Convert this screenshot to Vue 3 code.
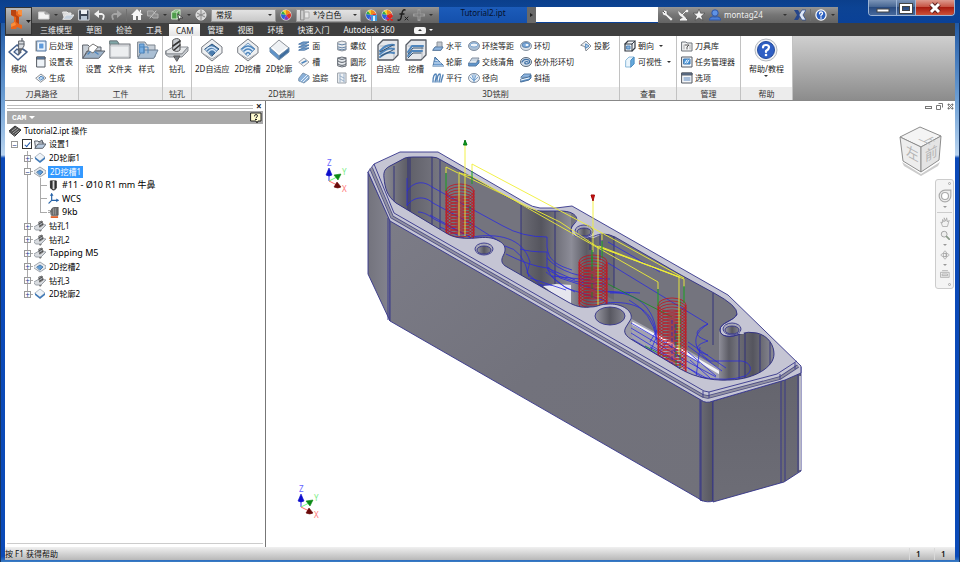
<script setup>
import { h, ref } from 'vue'

const K = '#5d626b'
const B = '#4f86bd'
const poly = (d, fill, stroke = K, w = 1) => `<path d="${d}" fill="${fill}" stroke="${stroke}" stroke-width="${w}" stroke-linejoin="round" stroke-linecap="round"/>`
const line = (d, stroke = K, w = 1) => poly(d, 'none', stroke, w)

const wheel = '<circle cx="6" cy="6" r="5.500" fill="#eee"/><path d="M6 6V1A5 5 0 0 1 10.500 4Z" fill="#f08a1c"/><path d="M6 6L10.500 4A5 5 0 0 1 9 10Z" fill="#e0352b"/><path d="M6 6L9 10A5 5 0 0 1 4 10.500Z" fill="#8a35b8"/><path d="M6 6L4 10.500A5 5 0 0 1 1.200 5Z" fill="#2c62d8"/><path d="M6 6L1.200 5A5 5 0 0 1 3 2Z" fill="#35a845"/><path d="M6 6L3 2A5 5 0 0 1 6 1Z" fill="#f4d52c"/>'
const hexBase = poly('M2 9L12 1L22 9V15L12 23L2 15Z', '#eef0f2', '#777b82') + line('M2 15L12 21L22 15', '#a4a8ae')
const block = poly('M2 7L7 2H22V17L17 22H2Z', '#e4e7eb', '#555b64', 1.3) + line('M4 8H18V20', '#b3b8bf')

const icons = {
  // large ribbon icons
  simulate: poly('M2 14L10 7L20 14L11 22Z', '#fff', '#46618c', 1.6) + poly('M7 14L10 11L14 14L11 17Z', '#dfe9f5', '#46618c', 1.3) + poly('M12 3H17V8L15 11H12Z', '#d9dce0', K) + line('M15 3V0M12 6H17', K, 1.2) + poly('M12 11L15 11L12 16Z', '#6d7178', K),
  setup: poly('M1 7H6L8 9H19V13H5L1 20Z', '#c9d0d8', K) + poly('M1 20L6 13H23L17 20Z', '#9db2c8', K) + poly('M7 9L11 6L16 9L11 15L7 13Z', '#fff', '#777') + line('M8 14L6 16M13 14L16 16', B, 1.4),
  folder: poly('M2 3H9L11 6H22V20H2Z', '#d8dade', '#777b80', 1.2) + poly('M2 3H9L11 6H2Z', '#7fa7a8', '#6f7f82') + poly('M3 8H21V19H3Z', '#eceef0', '#c4c7cb'),
  pattern: poly('M3 4H10L12 7H20V19H3Z', '#c7cfd8', '#7d858e') + poly('M3 20L7 12H23L19 20Z', '#aabfd4', '#6d7f92') + poly('M5 6H9V15H5Z', '#78aee2', B) + line('M5 9H13V15M9 9V15', B),
  drill: poly('M1 13L8 9H23L17 16H1Z', '#e6e8ea', '#8b8f95') + poly('M1 13V17L4 19H17L23 13V9L17 16H1Z', '#c4c8cc', '#8b8f95') + poly('M8 2Q12 -1 15 2V12Q12 15 8 12Z', '#c8ccd1', '#555') + line('M8 8L15 3M9 12L15 7', '#333', 1.6) + poly('M9 18H15L12 23Z', '#777c83', '#555'),
  adaptive2d: hexBase + poly('M5 11L12 6L19 11L12 18Z', '#4a7cae', '#2f5780') + line('M6 12Q11 6 17 12M8 14Q12 9 16 14', '#cfe2f5', 1.3),
  pocket2d: hexBase + poly('M5 11L12 5L19 11L12 18Z', '#dcebf8', '#7b9cbc') + line('M6 11Q12 5 18 11M8 13Q12 9 16 13M10 16Q12 13 14 16', B, 1.6),
  contour2d: poly('M3 10L12 2L22 10L12 18Z', '#eef1f4', '#8b9097') + poly('M3 10V14L12 22V18Z', '#5e93ca', '#6f8fae') + poly('M22 10V14L12 22V18Z', '#3e6d9f', '#6f8fae') + line('M5 10L12 16L20 10', '#fff', 1.5),
  adaptive3d: block + line('M4 13Q10 6 18 7M4 16Q12 9 18 11M4 19Q11 13 18 15', B, 2) + line('M4 14L17 7M5 18L17 12', '#36526f'),
  pocket3d: block + line('M4 14L8 8H19M4 18L8 13H18', B, 2) + line('M4 16L9 10H19M4 20L9 15H17', '#36526f'),
  helpBig: '<circle cx="12" cy="12" r="11" fill="#f0f1f4" stroke="#b4b9c0"/><circle cx="12" cy="12" r="8.500" fill="#2f5fc4" stroke="#234a9c"/>' + line('M9 9.500Q9 7 12 7Q15 7 15 9.500Q15 11 12 13V14', '#fff', 2.2) + '<circle cx="12" cy="17" r="1.300" fill="#fff"/>',
  // small ribbon icons
  post: poly('M2 1H11V11H2Z', '#cfe2f6', '#50739c') + poly('M4 3H9V9H4Z', '#5f9bdc', '#fff') + line('M1 1V11', '#888'),
  sheet: poly('M2 1H10V11H2Z', '#eef3f8', '#555b64') + poly('M2 1H10V3H2Z', '#5c8dc4', '#555b64'),
  generate: poly('M1 6L6 2L11 6L6 10Z', '#f4f5f6', '#8a8f96') + poly('M4 6L6 4L9 6L6 8Z', '#b9d6f2', B),
  face: poly('M1 4L5 2L11 2L7 4ZM1 7L5 5L11 5L7 7ZM1 10L5 8L11 8L7 10Z', '#7da9d8', '#4a76a6'),
  slot: poly('M1 6L6 2L11 6L6 10Z', '#f4f5f6', '#9a9fa6') + line('M4 7L8 5', B, 1.6),
  trace: poly('M1 6L5 1L11 4V7L6 11L1 9Z', '#8ab1da', '#7a94ae') + line('M3 9L9 3M5 10L10 5', '#e8f1fa'),
  thread: poly('M2 2Q6 0 10 2V10Q6 12 2 10Z', '#e9ecef', '#8f949b') + line('M2 4Q6 6 10 4M2 7Q6 9 10 7M2 9Q6 11 10 9', '#6483a5'),
  circular: poly('M2 2Q6 0 10 2V10Q6 12 2 10Z', '#e6eaee', '#646a73') + line('M2 2Q6 5 10 2M2 5Q6 8 10 5M2 8Q6 11 10 8', '#575d66'),
  bore: poly('M2 1H10V11H2Z', '#f0f3f6', '#9aa0a8') + line('M4 2V10M8 2V10M4 4L8 6M4 7L8 9', '#9ab0c8'),
  horizontal: poly('M1 10L3 7L5 7V2H10V7L11 7L9 10Z', '#c2c8cf', '#8b9199') + poly('M1 10L3 7H11L9 10Z', '#8fb5de', '#5b7fa6'),
  contour3d: poly('M1 10L3 1L6 4L8 6L12 10Z', '#6d9dd0', '#4a739e') + line('M3 4L6 5M2 7L9 7M1 10H12', '#dce9f6'),
  parallel: line('M1 10Q1 2 4 2Q5 3 3 10M5 10Q5 2 8 2Q9 3 7 10M9 10L11 3', '#5585b8', 1.4),
  scallop: '<ellipse cx="6" cy="6" rx="5.500" ry="4.500" fill="#a9bed4" stroke="#8490a0"/><ellipse cx="6" cy="5" rx="4" ry="2" fill="#eef4fa" stroke="#7aa4d0"/>',
  pencil: poly('M1 7L4 2H11L8 7Z', '#c8d5e2', '#8490a0') + poly('M1 7H8L11 4V7L8 10H1Z', '#5f94ca', '#5b7fa6') + line('M2 6H8', '#fff'),
  radial: '<ellipse cx="6" cy="6" rx="5.500" ry="4.500" fill="#edf2f7" stroke="#8490a0"/>' + line('M6 9L2 5M6 9L4 3M6 9V2M6 9L8 3M6 9L10 5', '#7ba6d3'),
  morph: '<ellipse cx="6" cy="6" rx="5.500" ry="4.500" fill="#dbe1e8" stroke="#8b96a3"/><ellipse cx="6" cy="5" rx="4" ry="2.500" fill="#7aa8da" stroke="#5b83ad"/><ellipse cx="7" cy="5" rx="1.500" ry="1" fill="#fff"/>',
  spiral: '<ellipse cx="6" cy="6" rx="5.500" ry="4.500" fill="#d3dfec" stroke="#606c7a"/>' + line('M2 6Q4 2 9 4Q11 7 7 8Q4 8 5 6Q7 5 8 6', '#3f6fa3', 1.2),
  ramp: poly('M1 5L4 2H11L9 5Z', '#8db5e0', '#5b7fa6') + poly('M1 7L9 5L11 3V6L9 8L1 10Z', '#5f94ca', '#476f9a') + line('M1 8L9 6', '#fff'),
  project: poly('M1 5L6 1L11 6L6 11L5 7Z', '#eef0f2', '#8a8f96') + poly('M6 4L9 6L6 8Z', '#c5dbf1', B),
  orient: poly('M1 4L4 1H11V8L8 11H1Z', '#f2f4f6', '#333a44', 1.2) + line('M1 4H8V11M8 4L11 1', '#333a44') + poly('M3 6H6V9H3Z', '#8ab4de', B),
  visible: poly('M2 4L5 1H10V8L7 11H2Z', '#eaf5fc', '#8ab9da') + poly('M7 4L10 1V8L7 11Z', '#66a9dc', '#4d8ec2'),
  library: poly('M1 2H5L6 3H11V11H1Z', '#f3f4f5', '#6d7279') + line('M4 5H8L6 7V9', '#555') + line('M3 5V9M9 5V9', '#aaa'),
  tasks: poly('M1 1H11V11H1Z', '#f4f8fc', '#555b64') + poly('M3 3H9V8H3Z', '#4f9be0', '#3b75ad') + line('M4 7L6 4M6 7L8 4', '#fff'),
  options: poly('M1 1H11V11H1Z', '#f4f6f8', '#555b64') + poly('M1 1H11V3H1Z', '#5b7498', '#555b64') + line('M3 6H9M3 8H9', '#5b86bd'),
  // quick access icons
  newDoc: poly('M1 3H7L11 5V10H1Z', '#f3f3f3', '#d6d6d6') + poly('M7 3V5H11Z', '#bbb', '#999'),
  open: poly('M1 3H5L6 4H9V5L3 10Z', '#dcdcdc', '#eee') + poly('M1 10L4 6H12L9 10Z', '#c3cfdc', '#e9e9e9'),
  save: poly('M1 1H11V11H1Z', '#3c4654', '#d2d7dd') + '<path d="M3 1H9V5H3Z" fill="#eef2f5"/><path d="M3 7H9V11H3Z" fill="#b9c6d4"/>',
  undo: line('M3 5H8Q11 6 9 10', '#f1f1f1', 1.8) + '<path d="M0 5L5 1V9Z" fill="#f1f1f1"/>',
  redo: line('M9 5H4Q1 6 3 10', '#a5a5a5', 1.8) + '<path d="M12 5L7 1V9Z" fill="#a5a5a5"/>',
  home: '<path d="M6 0L12 6H10V11H7V7H5V11H2V6H0Z" fill="#f5f5f5"/><path d="M9 1H10V4L9 3Z" fill="#fff"/>',
  transfer: poly('M1 2H6L8 5H11V9H6L4 7H1Z', '#8d8d8d', '#b0b0b0') + line('M3 9L9 2', '#c6c6c6'),
  select: poly('M1 3L4 1H9V8L6 10H1Z', '#4e9d4a', '#cfe8cc') + line('M1 3H6V10M6 3L9 1', '#cfe8cc') + poly('M7 5L12 9L9 9L8 12Z', '#fff', '#444'),
  sphere: '<circle cx="6" cy="6" r="5" fill="#d5d5d5" stroke="#f0f0f0"/>' + line('M2 4L10 8M6 1V11M2 8L10 4', '#888'),
  wheel,
  wheelPin: wheel + '<path d="M6 6H12V12H6Z" fill="#3f9be0"/><path d="M8 7H10V12H8Z" fill="#d5ecff"/>',
  wheelX: wheel + line('M7 7L11 11M11 7L7 11', '#e0201a', 1.8),
  fx: line('M8 1Q6 0 5 4L4 9Q3 12 1 11M3 5H7', '#1e1e1e', 1.4) + line('M8 8L11 11M11 8L8 11', '#1e1e1e'),
  plus: line('M6 1V11M1 6H11', '#9c9c9c', 3) + line('M6 2V10M2 6H10', '#757575'),
  swatch: poly('M1 1H4V11H1Z', '#cfcfcf', '#8d8d8d') + poly('M5 3H9V9H5Z', '#e8e8e8', '#aaa'),
  // info bar
  wrench: '<path d="M1 3L3 1L6 2L6 5L12 10L10 12L5 7L2 6Z" fill="#f2f2f2" stroke="#555" stroke-width=".5"/><path d="M2 2L4 4" stroke="#555"/>',
  dish: '<path d="M1 2Q2 9 9 9L6 6Z" fill="#f2f2f2"/><path d="M5 6L9 2M3 11H10L7 8Z" stroke="#f2f2f2" fill="#f2f2f2"/><circle cx="10" cy="2" r="1.300" fill="#f2f2f2"/>',
  star: '<path d="M6 0L7.600 4.200H12L8.500 7L9.800 11.500L6 8.800L2.200 11.500L3.500 7L0 4.200H4.400Z" fill="#f5f5f5" stroke="#444" stroke-width=".6"/>',
  user: '<circle cx="6" cy="4" r="3.200" fill="#5f93e6" stroke="#2f57a8"/><path d="M0 11Q1 7 6 8Q11 7 12 11Z" fill="#4c80d8" stroke="#2f57a8"/>',
  exchange: '<path d="M0 1H4L7 6L4 11H0L3 6Z" fill="#26458a"/><path d="M12 1H8L5 6L8 11H12L9 6Z" fill="#dfe8f6" stroke="#26458a" stroke-width=".7"/>',
  help: '<circle cx="6" cy="6" r="5.700" fill="#fff"/><circle cx="6" cy="6" r="4.500" fill="#2c5fbe"/>' + line('M4.500 4.800Q4.500 3 6 3Q7.700 3 7.500 4.600Q7.500 5.500 6 6.300V7', '#fff', 1.3) + '<circle cx="6" cy="9" r=".8" fill="#fff"/>',
  media: '<rect x="0" y="3" width="12" height="7" rx="2" fill="#f4f4f4"/><path d="M4 7L6 5L8 7Z" fill="#333"/>',
  // browser tree
  part: poly('M0 6L6 1L12 5L6 11Z', '#4c4c4c', '#333') + line('M3 6L7 3M4 8L9 4M6 9L10 6', '#a9a9a9'),
  treeSetup: poly('M1 3H4L5 4H9V7L2 10Z', '#e6e9ee', '#59606a') + poly('M1 10L4 6H12L9 10Z', '#b9cbe0', '#59606a') + line('M5 4L8 2L9 5', '#59606a'),
  treeContour: poly('M1 5L6 1L11 5L6 9Z', '#eef3f8', '#b4bcc5') + '<path d="M1 5V7L6 11L11 7V5L6 9Z" fill="#3f79b8"/>',
  treePocket: poly('M0 5L6 1L12 5V7L6 11L0 7Z', '#e6e9ec', '#a0a5ac') + poly('M3 6L6 4L9 6L6 9Z', '#5d9bd8', '#4d7aa6'),
  treeDrill: poly('M0 7L5 4L12 5L7 10H2Z', '#d8dbdf', '#9aa0a8') + poly('M5 2L8 1L9 5L6 7Z', '#a4a9b0', '#777') + line('M5 4L8 2M6 6L9 4', '#444') + '<path d="M5 10H8L6 12Z" fill="#777"/>',
  endmill: poly('M3 1H9V9Q6 13 3 9Z', '#333', '#222') + '<path d="M5 1H7V10H5Z" fill="#d9d9d9"/>',
  wcs: line('M4 1V8H11M4 8L1 11', '#2864a8', 1.3) + '<path d="M2 3L4 0L6 3ZM9 6L12 8L9 10Z" fill="#2864a8"/>',
  nc: poly('M3 4L5 1L11 0V9H4Z', '#6d6d6d', '#555') + line('M6 2V8M8 2V8M0 4H3M0 6H3', '#9a9a9a') + '<path d="M3 10H11V12H3Z" fill="#e0622c"/>',
  helpNote: poly('M1 1H11V9H8L7 11L6 9H1Z', '#fffbd0', '#222') + line('M4.500 4Q4.500 2.500 6 2.500Q7.500 2.500 7.500 4L6 6', '#222') + '<rect x="5" y="7" width="2" height="1" fill="#222"/>',
  // navigation bar
  navWheel: '<path d="M1 6A5 5 0 0 1 6 1H11V6A5 5 0 0 1 1 6Z" fill="#eee" stroke="#aaa"/><circle cx="6" cy="6" r="3" fill="#fff" stroke="#aaa"/>',
  hand: poly('M3 11L1 6L3 7V3L5 6V1L7 5L8 1L9 6L11 4L9 11Z', '#f2f2f2', '#aaa'),
  zoom: '<circle cx="5" cy="5" r="3.500" fill="#eee" stroke="#999"/>' + line('M8 8L11 11', '#8a9a88', 2),
  orbit: '<ellipse cx="6" cy="6" rx="5" ry="2" fill="none" stroke="#aaa"/><ellipse cx="6" cy="6" rx="2" ry="5" fill="none" stroke="#aaa"/>' + line('M6 4L8 6L6 8', '#999'),
  look: poly('M1 4H11V10H1Z', '#eee', '#aaa') + line('M3 2H9M3 6H9V8H3Z', '#aaa')
}

const Icon = ({ name, size }) => h('svg', { viewBox: `0 0 ${size || 12} ${size || 12}`, 'aria-hidden': 'true', innerHTML: icons[name] })
Icon.props = ['name', 'size']

const quickA = [['newDoc', '新建', true], ['open', '打开'], ['save', '保存'], ['undo', '放弃'], ['redo', '重做']]
const quickB = [['home', '主视图'], ['transfer', '传递', true], ['select', '选择', true], ['sphere', '材料']]
const quickC = [['wheelPin', '调整'], ['wheelX', '清除'], ['fx', '参数'], ['plus', '添加', true]]
const tabs = ['三维模型', '草图', '检验', '工具', 'CAM', '管理', '视图', '环境', '快速入门', 'Autodesk 360']
const activeTab = ref('CAM')

const panels = [
  { id: 'path', title: '刀具路径', big: [['simulate', '模拟']], cols: [[['post', '后处理'], ['sheet', '设置表'], ['generate', '生成']]] },
  { id: 'job', title: '工件', big: [['setup', '设置'], ['folder', '文件夹'], ['pattern', '样式']], cols: [] },
  { id: 'drilling', title: '钻孔', big: [['drill', '钻孔']], cols: [] },
  { id: 'mill2d', title: '2D铣削', big: [['adaptive2d', '2D自适应'], ['pocket2d', '2D挖槽'], ['contour2d', '2D轮廓']], cols: [[['face', '面'], ['slot', '槽'], ['trace', '追踪']], [['thread', '螺纹'], ['circular', '圆形'], ['bore', '镗孔']]] },
  { id: 'mill3d', title: '3D铣削', big: [['adaptive3d', '自适应'], ['pocket3d', '挖槽']], cols: [[['horizontal', '水平'], ['contour3d', '轮廓'], ['parallel', '平行']], [['scallop', '环绕等距'], ['pencil', '交线清角'], ['radial', '径向']], [['morph', '环切'], ['spiral', '依外形环切'], ['ramp', '斜插']], [['project', '投影']]] },
  { id: 'look', title: '查看', big: [], cols: [[['orient', '朝向', true], ['visible', '可视性', true]]] },
  { id: 'manage', title: '管理', big: [], cols: [[['library', '刀具库'], ['tasks', '任务管理器'], ['options', '选项']]] },
  { id: 'assist', title: '帮助', big: [['helpBig', '帮助/教程', true]], cols: [] }
]

const tree = [
  { level: 0, icon: 'part', label: 'Tutorial2.ipt 操作' },
  { level: 1, icon: 'treeSetup', label: '设置1', exp: '−' },
  { level: 2, icon: 'treeContour', label: '2D轮廓1', exp: '+' },
  { level: 2, icon: 'treePocket', label: '2D挖槽1', exp: '−', selected: true },
  { level: 3, icon: 'endmill', label: '#11 - Ø10 R1 mm 牛鼻', latin: true },
  { level: 3, icon: 'wcs', label: 'WCS', latin: true },
  { level: 3, icon: 'nc', label: '9kb', latin: true, last: true },
  { level: 2, icon: 'treeDrill', label: '钻孔1', exp: '+' },
  { level: 2, icon: 'treeDrill', label: '钻孔2', exp: '+' },
  { level: 2, icon: 'treeDrill', label: 'Tapping M5', exp: '+', latin: true },
  { level: 2, icon: 'treePocket', label: '2D挖槽2', exp: '+' },
  { level: 2, icon: 'treeDrill', label: '钻孔3', exp: '+' },
  { level: 2, icon: 'treeContour', label: '2D轮廓2', exp: '+', last: true }
]

const pocket = 'M384 178C383 171 386 168 390 166L405 158Q408 157 413 157H432Q437 157 441 160L520 204C529 209 534 211 543 211H560C570 211 576 214 577 219C577 223 571 225 571 230C571 235 577 238 584 238C594 238 596 234 603 234Q609 234 615 237L681 275L714 293Q738 306 737 314C735 321 720 322 720 330C720 337 731 338 740 334Q748 331 757 333C769 336 774 346 774 354C774 367 755 379 730 380C708 381 690 376 674 365L634 341C625 336 623 332 626 327L631 319C633 311 623 304 610 304C598 304 599 307 590 307C581 308 575 306 568 302L507 267C501 264 501 260 503 256C507 249 505 244 499 241C492 237 485 237 476 238C463 239 454 238 446 233L396 203C387 196 385 188 384 178Z'

const helix = (cx, top, bottom, step) => {
  const rings = []
  for (let y = top; y <= bottom; y += step) rings.push({ cx, cy: y })
  return rings
}
const helices = [
  { x: 446, top: 190, bottom: 236, rings: helix(460, 191, 240, 3) },
  { x: 579, top: 262, bottom: 304, rings: helix(593, 262, 306, 3) },
  { x: 658, top: 305, bottom: 372, rings: helix(672, 305, 372, 3) }
]

const blueCuts = [
  'M407 191C413 182 423 180 432 187L470 208L503 226Q522 237 547 237V247C548 262 560 266 572 270',
  'M407 205C415 196 425 196 433 203L470 223L500 242M520 249Q530 252 547 252V267C550 278 560 285 575 292',
  'M407 178V206M418 212C424 212 430 216 434 219L470 237',
  'M430 215L475 240M440 227L464 238',
  'M472 237C497 233 523 237 530 262L527 273L543 287',
  'M505 246Q524 250 529 277M506 254Q530 266 547 268L575 280',
  'M548 267L560 278L600 291L640 293M546 272L566 288L606 301',
  'M547 258Q565 278 610 279M530 278L566 290M530 285H552M552 276L590 280M548 270Q570 285 606 284',
  'M608 242L660 272M608 263L708 324C693 331 694 336 708 341C694 345 694 351 708 355',
  'M708 324C690 335 693 350 710 361H741C751 362 754 371 745 376Q728 382 700 377',
  'M610 293L630 293M605 303C635 300 655 310 656 338L650 352M608 292C640 292 658 310 657 345',
  'M629 300Q652 312 657 340M631 328L690 363L716 377',
  'M631 333L683 365M632 339L680 368M700 347L696 377M631 323L700 363M632 343L672 367',
  'M650 342L657 330M660 352L668 340',
  'M688 346L722 371M688 352L716 376M690 360L710 378M650 347L708 379M688 342L726 368M688 368L706 380'
]
</script>

<template>
  <div class="window">
    <header class="head">
      <button class="app-button" aria-label="应用程序菜单">
        <svg viewBox="0 0 27 27" aria-hidden="true">
          <path d="M5 2H10L11 4L12 2H16V8L13 9V16L16 17V21L11 19L10 21H5V16L8 14V9L5 7Z" fill="#e8651b" />
          <path d="M5 2H10V7L13 9V16L10 14V9L5 7Z" fill="#b94410" />
          <path d="M12 2H16V8L12 6ZM5 16L9 14L10 17L5 19Z" fill="#f98f3c" />
          <path d="M20 12H25L22.500 15Z" fill="#222" />
        </svg>
      </button>
      <div class="title-row">
        <div class="quick">
          <template v-for="q in quickA" :key="q[0]">
            <button class="tool" :aria-label="q[1]"><Icon :name="q[0]" /></button><i v-if="q[2]" class="caret"></i>
          </template>
          <i class="rule"></i>
          <template v-for="q in quickB" :key="q[0]">
            <button class="tool" :aria-label="q[1]"><Icon :name="q[0]" /></button><i v-if="q[2]" class="caret"></i>
          </template>
          <div class="combo">
            <select aria-label="材料"><option>常规</option></select><i class="caret"></i>
          </div>
          <button class="tool" aria-label="外观"><Icon name="wheel" /></button>
          <div class="combo">
            <Icon name="swatch" class="ico" /><select aria-label="外观"><option>*冷白色</option></select><i class="caret"></i>
          </div>
          <template v-for="q in quickC" :key="q[0]">
            <button class="tool" :aria-label="q[1]"><Icon :name="q[0]" /></button><i v-if="q[2]" class="caret"></i>
          </template>
        </div>
        <h1 class="doc-title">Tutorial2.ipt</h1>
        <button class="expand" aria-label="展开"><i></i></button>
        <input class="search" type="text" aria-label="搜索" />
        <div class="info">
          <button class="tool" aria-label="搜索工具"><Icon name="wrench" /></button>
          <button class="tool" aria-label="通讯中心"><Icon name="dish" /></button>
          <button class="tool" aria-label="收藏夹"><Icon name="star" /></button>
          <button class="account"><Icon name="user" class="ico" /><span>montag24</span><i class="caret"></i></button>
          <button class="tool" aria-label="Exchange"><Icon name="exchange" /></button>
          <i class="rule"></i>
          <button class="tool" aria-label="帮助"><Icon name="help" /></button><i class="caret"></i>
        </div>
        <div class="controls">
          <button aria-label="最小化"><svg viewBox="0 0 18 16"><rect x="3" y="9" width="12" height="3" fill="#fff" stroke="#444" /></svg></button>
          <button class="max" aria-label="最大化"><svg viewBox="0 0 18 16"><rect x="4" y="5" width="10" height="7" fill="none" stroke="#444" stroke-width="4" /><rect x="4" y="5" width="10" height="7" fill="none" stroke="#fff" stroke-width="2" /></svg></button>
          <button class="close" aria-label="关闭"><svg viewBox="0 0 18 16"><path d="M5 4L13 12M13 4L5 12" stroke="#5a2020" stroke-width="5" /><path d="M5 4L13 12M13 4L5 12" stroke="#fff" stroke-width="3" /></svg></button>
        </div>
      </div>
      <nav class="tabs">
        <button v-for="t in tabs" :key="t" :class="{ active: t === activeTab }" @click="activeTab = t">{{ t }}</button>
        <button class="media" aria-label="功能区显示"><Icon name="media" class="ico" /><i class="caret light"></i></button>
      </nav>
    </header>

    <div class="ribbon">
      <section v-for="p in panels" :key="p.id" class="panel" :class="p.id">
        <div class="panel-body">
          <button v-for="b in p.big" :key="b[1]" class="big">
            <Icon :name="b[0]" :size="24" /><span>{{ b[1] }}</span><i v-if="b[2]" class="caret"></i>
          </button>
          <div v-for="(c, i) in p.cols" :key="i" class="col">
            <button v-for="s in c" :key="s[1]"><Icon :name="s[0]" class="ico" /><span>{{ s[1] }}</span><i v-if="s[2]" class="caret"></i></button>
          </div>
        </div>
        <h2>{{ p.title }}</h2>
      </section>
    </div>

    <main class="work">
      <aside class="browser">
        <div class="grip"><i></i><button aria-label="关闭面板">×</button></div>
        <div class="browser-head"><button>CAM<i></i></button><button class="tool" aria-label="面板帮助"><Icon name="helpNote" /></button></div>
        <ul class="tree">
          <li v-for="n in tree" :key="n.label" :class="['l' + n.level, { last: n.last, latin: n.latin }]">
            <i v-if="n.level > 1" class="guide"></i>
            <i v-if="n.level === 3" class="branch"></i>
            <button v-if="n.exp" class="exp" :aria-label="'展开 ' + n.label">{{ n.exp }}</button>
            <input v-if="n.level === 1" type="checkbox" checked :aria-label="n.label" />
            <Icon :name="n.icon" class="ico" />
            <span :class="{ selected: n.selected }">{{ n.label }}</span>
          </li>
        </ul>
        <i class="foot"></i>
      </aside>

      <div class="view">
        <svg class="scene" viewBox="266 101 689 446" preserveAspectRatio="xMinYMin meet" role="img" aria-label="零件模型">
          <defs>
            <linearGradient id="front" x1="0" y1="0" x2="1" y2="1"><stop offset="0" stop-color="#7c7c87" /><stop offset=".5" stop-color="#72727c" /><stop offset="1" stop-color="#71717a" /></linearGradient>
            <linearGradient id="side" x1="0" y1="0" x2="0" y2="1"><stop offset="0" stop-color="#64646d" /><stop offset="1" stop-color="#6d6d76" /></linearGradient>
            <linearGradient id="left" x1="0" y1="0" x2="1" y2="0"><stop offset="0" stop-color="#73737d" /><stop offset="1" stop-color="#84848f" /></linearGradient>
            <linearGradient id="edge" x1="0" y1="0" x2="1" y2="0"><stop offset="0" stop-color="#6b6b75" /><stop offset="1" stop-color="#56565f" /></linearGradient>
            <linearGradient id="column" x1="0" y1="0" x2="1" y2="0"><stop offset="0" stop-color="#8e8e99" /><stop offset=".5" stop-color="#5c5c65" /><stop offset="1" stop-color="#777781" /></linearGradient>
            <linearGradient id="bend" x1="0" y1="0" x2="1" y2="0"><stop offset="0" stop-color="#6b6b74" /><stop offset=".4" stop-color="#55555e" /><stop offset="1" stop-color="#8c8c97" /></linearGradient>
            <linearGradient id="wallLeft" x1="0" y1="0" x2="1" y2="0"><stop offset="0" stop-color="#8d8d98" /><stop offset=".4" stop-color="#5e5e67" /><stop offset="1" stop-color="#777781" /></linearGradient>
            <linearGradient id="hole" x1="0" y1="0" x2="1" y2="0"><stop offset="0" stop-color="#9a9aa4" /><stop offset=".5" stop-color="#585861" /><stop offset="1" stop-color="#85858f" /></linearGradient>
            <clipPath id="pocket"><path :d="pocket" /></clipPath>
          </defs>

          <g stroke="#34348a" stroke-width=".9" stroke-linejoin="round">
            <path d="M368 172L390 220V321L368 274Z" fill="url(#left)" />
            <path d="M390 220L703 401V501L390 321Z" fill="url(#front)" />
            <path d="M700 399Q706 403 713 401V501Q708 503 700 500Z" fill="url(#edge)" />
            <path d="M713 401L784 380L801 367V471L784 482L713 502Z" fill="url(#side)" />
            <path d="M388 218V320M701 401V501M781 381V483M785 380V481M798 371V472" fill="none" />
            <path d="M368 172L374 164L400 152H438L526 203Q532 207 540 208H556L572 206L728 295L801 366V373L785 380L713 401Q706 404 701 400L390 221Z" fill="#c5c5d4" />
            <path d="M371 168L392 217L703 396L708 397L780 378L798 366" fill="none" stroke="#4c4c84" stroke-width="3.600" />
            <path d="M371 168L392 217L703 396L708 397L780 378L798 366" fill="none" stroke="#9191a2" stroke-width="2" />
            <path d="M374 164L394 213L704 391L709 392L777 374L797 361M780 374V379M703 391V397M709 392V398M795 363V369" fill="none" />
          </g>
          <path d="M800 376V470" stroke="#b9b9c6" stroke-width="2" />

          <path :d="pocket" fill="#74747e" />
          <g clip-path="url(#pocket)" stroke-width=".8">
            <path d="M384 150H440V235H384Z" fill="url(#wallLeft)" />
            <path d="M521 200H571V290H521Z" fill="url(#bend)" />
            <path d="M543 286L556 284L572 285V303H566Z" fill="#e6e6ee" />
            <path d="M630 318L655 332L728 373L722 382L690 378L625 341Z" fill="#a3a3b0" />
            <path d="M632 323L660 338L720 373" stroke="#f3f3f8" stroke-width="3" fill="none" />
            <path d="M571 230H602V310H571Z" fill="url(#column)" />
            <path d="M602 230H614V300L602 294Z" fill="#696973" />
            <path d="M719 330H739V384H719Z" fill="url(#column)" />
            <path d="M739 330H774V384H739Z" fill="url(#bend)" />
            <path d="M624 327L632 316V342H624Z" fill="#9a9aa6" />
            <path d="M394 166V203M408 157V211M410 157V212M432 157V226M440 160V230M521 204V275M555 211V284M614 237V288M713 293V345M739 333V379M745 333V379M760 335V376M770 342V368M590 238V250M600 235V260" fill="none" stroke="#24247c" />
            <path v-for="(d, i) in blueCuts" :key="i" :d="d" fill="none" stroke="#2a2ae0" />
            <path d="M506 267L566 302M608 284L672 317M645 346L675 362" stroke="#13901c" fill="none" />
            <g v-for="(x, i) in helices" :key="i" fill="none" stroke="#c4141e">
              <ellipse v-for="(r, j) in x.rings" :key="j" :cx="r.cx" :cy="r.cy" rx="14" ry="7" />
              <path :d="`M${x.x} ${x.top}V${x.bottom}M${x.x + 28} ${x.top}V${x.bottom}`" />
            </g>
            <path d="M672 320V366M675 324V360M669 345L684 362" stroke="#2828c0" stroke-dasharray="4 2" fill="none" />
            <path d="M470 206V226M592 256V300M598 262V296M680 300V368M676 324V370" stroke="#13901c" stroke-dasharray="6 3" fill="none" />
          </g>
          <path :d="pocket" fill="none" stroke="#2e2e84" stroke-width=".9" />

          <path d="M572 235C570 226 577 222 577 218L590 226L602 234L594 238H578Z" fill="#c5c5d4" />
          <path d="M723 335C718 327 732 322 736 316L744 334H735Z" fill="#c5c5d4" />
          <g stroke="#34348a" stroke-width=".9">
            <path d="M577 219C577 223 571 225 571 230C571 235 577 238 584 238C594 238 596 234 603 234M737 314C735 321 720 322 720 330C720 337 731 338 740 334" fill="none" />
            <ellipse cx="584" cy="231" rx="9" ry="6" fill="#a9a9b6" /><ellipse cx="584" cy="232" rx="7" ry="4" fill="url(#hole)" />
            <ellipse cx="484" cy="249" rx="9" ry="6" fill="#a9a9b6" /><ellipse cx="484" cy="250" rx="7" ry="4" fill="url(#hole)" />
            <ellipse cx="610" cy="316" rx="15" ry="9" fill="url(#hole)" />
            <ellipse cx="732" cy="329" rx="9" ry="6" fill="#a9a9b6" /><ellipse cx="732" cy="330" rx="7" ry="4" fill="url(#hole)" />
          </g>

          <g fill="none" stroke="#f1ef35" stroke-width=".9">
            <path d="M465 144V236M459 172V236M459 173L471 176M446 173V167L458 173M472 171V164L602 233L684 278M459 173L560 222L596 246L680 277M471 176L600 249L658 282V289M602 233V240M593 200V252M598 246V305M599 246L679 277V355M602 248L684 279V287" />
          </g>
          <path d="M446 173V191M472 171V184M602 241V258M658 289V306M684 286V303M592 250V266" stroke="#16a21f" />
          <path d="M465 140L467 145H463.500Z" fill="#08a71c" stroke="#067512" />
          <path d="M591 195H594.500L593 201Z" fill="#d01212" stroke="#a00808" />

          <g v-for="(o, i) in [[329, 181], [301, 507]]" :key="i" :transform="`translate(${o[0]} ${o[1]})`">
            <path d="M0 0V-10" stroke="#3333ee" /><path d="M0 0L8 -4" stroke="#6aff7a" /><path d="M0 0L8 4" stroke="#ff6a6a" />
            <path d="M-3 -6L0 -13L3 -6Q0 -4 -3 -6Z" fill="#0d0dcc" stroke="#0d0dcc" stroke-width=".6" />
            <path d="M5 -6L12 -7L9 -1Z" fill="#0a8a14" stroke="#0a8a14" stroke-width=".6" />
            <path d="M5 6L8 1L12 6Q9 8 5 6Z" fill="#6a0a0a" stroke="#6a0a0a" stroke-width=".6" />
            <text x="-2" y="-15" fill="#6666ff">Z</text><text x="13" y="-6" fill="#7dee88">Y</text><text x="13" y="11" fill="#ff7777">X</text>
          </g>
        </svg>

        <div class="doc-controls">
          <button aria-label="最小化文档"><svg viewBox="0 0 7 7"><rect x=".5" y="3.500" width="6" height="2" fill="#fff" stroke="#777" /></svg></button>
          <button aria-label="还原文档"><svg viewBox="0 0 7 7"><path d="M2.500 .5H6.500V4.500M.5 2.500H4.500V6.500H.5Z" fill="none" stroke="#777" /></svg></button>
          <button aria-label="关闭文档"><svg viewBox="0 0 7 7"><path d="M1 1L6 6M6 1L1 6" stroke="#777" stroke-width="2" /><path d="M2 2L5 5M5 2L2 5" stroke="#fff" /></svg></button>
        </div>
        <svg class="cube" viewBox="0 0 46 50" aria-label="ViewCube" role="img">
          <path d="M4 36L23 48L42 36L40 40L23 50L6 40Z" fill="#ccc" />
          <g stroke="#8d8d8d" stroke-linejoin="round">
            <path d="M2 11L22 1L43 10L23 21Z" fill="#f4f4f4" />
            <path d="M2 11L23 21V46L5 35Z" fill="#ededed" />
            <path d="M43 10L23 21V46L41 34Z" fill="#e4e4e4" />
          </g>
          <text transform="matrix(.9 .4 -.8 .4 20 13)">上</text>
          <text transform="matrix(.9 .5 0 1 8 29)">左</text>
          <text transform="matrix(.9 -.5 0 1 27 36)">前</text>
        </svg>
        <div class="nav-bar">
          <i class="dot"></i>
          <button aria-label="控制盘"><Icon name="navWheel" class="wheel" /></button><i class="caret"></i>
          <hr />
          <button aria-label="平移"><Icon name="hand" /></button>
          <button aria-label="缩放"><Icon name="zoom" /></button><i class="caret"></i>
          <button aria-label="动态观察"><Icon name="orbit" /></button><i class="caret"></i>
          <button aria-label="观察方向"><Icon name="look" /></button>
          <i class="dot"></i>
        </div>
      </div>
    </main>

    <footer class="status"><span>按 F1 获得帮助</span><b>1</b><b>1</b></footer>
  </div>
</template>

<style>
body { margin: 0; background: #0a4aa8; }
</style>

<style scoped>
.window {
  box-sizing: border-box;
  min-height: 100vh;
  display: grid;
  grid-template-rows: auto auto 1fr auto;
  padding: 0 5px 2px;
  background:
    linear-gradient(#0b3f8c, #0c4394 8px, #0a4197 23px, transparent 23px),
    linear-gradient(90deg, #17345f 1px, transparent 1px, transparent calc(100% - 1px), #17345f calc(100% - 1px)),
    linear-gradient(#0b4597, #6d9fd4 100px, #b9d4f0 155px, #0b49b8 158px, #0a4ab8 99%, #3d7fc4);
  font-family: "Noto Sans", "Noto Sans CJK SC", sans-serif;
  font-size: 8px;
  line-height: 12px;
  color: #222;
}
button { font: inherit; color: inherit; background: none; border: 0; padding: 0; margin: 0; display: flex; align-items: center; }
svg { display: block; }
i { flex: none; }
h1, h2 { margin: 0; font-size: inherit; font-weight: 400; }
.ico, .tool svg { width: 12px; height: 12px; flex: none; }
.caret { width: 0; height: 0; border: 2px solid transparent; border-top: 2px solid #333; border-bottom: 0; }
.caret.light { border-top-color: #fff; }
.rule { width: 1px; height: 12px; background: #707070; }

.head { display: grid; grid-template-columns: 27px minmax(0, 1fr); grid-template-rows: 23px 13px; }
.head::after { content: ""; grid-area: 2 / 1 / 3 / 3; background: #3f3f3f; }
.app-button { grid-area: 1 / 1 / 3 / 2; margin: 7px 0 1px; background: linear-gradient(#b9b9b9, #6f6f6f); border: 1px solid #333; z-index: 1; overflow: hidden; }
.app-button svg { width: 27px; height: 27px; flex: none; }
.title-row { grid-area: 1 / 2; display: flex; align-items: flex-end; min-width: 0; }
.quick, .info { display: flex; align-items: center; gap: 4px; height: 16px; padding: 0 6px; flex: none; background: linear-gradient(#969696, #757575 50%, #636363); box-sizing: border-box; }
.combo { display: flex; align-items: center; box-sizing: border-box; width: 65px; height: 13px; padding: 0 3px; background: linear-gradient(#e3e3e3, #c9c9c9); border: 1px solid #999; }
.combo select { appearance: none; flex: 1; min-width: 0; border: 0; background: none; font: inherit; padding: 0 0 0 1px; color: #111; }
.doc-title { width: 88px; height: 16px; line-height: 12px; text-align: center; color: #06122c; background: linear-gradient(#1c5cba, #1450ac); flex: none; }
.expand { width: 9px; height: 16px; justify-content: center; background: #696969; flex: none; }
.expand i { border: 2px solid transparent; border-left: 3px solid #222; border-right: 0; }
.search { flex: 1; min-width: 0; height: 15px; box-sizing: border-box; border: 0; padding: 0 4px; margin-bottom: 1px; font: inherit; background: #fff; }
.info { width: 180px; padding: 0 3px; }
.account { gap: 3px; flex: 1; color: #f0f0f0; }
.account .caret { margin-left: auto; margin-right: 3px; }
.controls { align-self: flex-start; display: flex; margin-left: 30px; border: 1px solid #9db4d4; border-top: 0; border-radius: 0 0 4px 4px; overflow: hidden; flex: none; }
.controls button { box-sizing: border-box; height: 15px; width: 28px; justify-content: center; background: linear-gradient(#7c95b8, #42628f 50%, #294b80 50%, #47699c); border-right: 1px solid #9db4d4; }
.controls svg { width: 18px; height: 16px; flex: none; }
.controls .max { width: 19px; }
.controls .close { width: 38px; border: 0; background: linear-gradient(#dd9a8e, #c44d3c 50%, #a81c10 50%, #cc5238); }
.tabs { grid-area: 2 / 2; display: flex; padding-left: 1px; color: #f2f2f2; z-index: 1; }
.tabs button { padding: 0 7px; line-height: 13px; white-space: nowrap; }
.tabs .active { background: linear-gradient(#fff, #e4e4e4); color: #222; margin-top: 1px; }
.tabs .media { gap: 3px; padding: 0 12px; }

.ribbon { display: flex; background: linear-gradient(#cfcfcf, #8c8c8c); border-bottom: 1px solid #888; }
.panel { display: grid; grid-template-rows: 51px 13px; flex: none; background: #fff; border-right: 1px solid #c2c2c2; box-sizing: border-box; }
.panel h2 { line-height: 13px; text-align: center; background: #ececec; color: #333; }
.panel-body { display: flex; align-items: flex-start; padding-top: 2px; }
.path { width: 74px; }
.job { width: 84px; }
.drilling { width: 29px; }
.mill2d { width: 180px; }
.mill3d { width: 248px; }
.look { width: 57px; }
.manage { width: 64px; }
.assist { width: 52px; }
.big { flex-direction: column; flex: none; white-space: nowrap; }
.big svg { width: 24px; height: 24px; margin-bottom: 1px; }
.col { display: grid; grid-template-rows: repeat(3, 16px); flex: none; }
.col button { gap: 2px; white-space: nowrap; }
.col .caret { margin-left: 3px; }
.path .big, .drilling .big { width: 28px; }
.path .col { margin-left: 2px; }
.job .panel-body { justify-content: space-between; padding: 2px 3px 0 2px; }
.job .big { min-width: 25px; }
.mill2d .panel-body { padding-left: 3px; gap: 5px; }
.mill2d .col { margin-left: 1px; }
.mill2d .col + .col { margin-left: 3px; }
.mill3d .panel-body { padding-left: 4px; gap: 4px; }
.mill3d .col { margin-left: 2px; }
.mill3d .big { min-width: 24px; }
.mill3d .big + .col { margin-left: 0; }
.look .panel-body, .manage .panel-body { padding-left: 4px; }
.assist .panel-body { justify-content: center; }

.work { display: grid; grid-template-columns: 261px minmax(0, 1fr); min-height: 0; background: #fff; }
.browser { display: flex; flex-direction: column; border-right: 1px solid #777; padding: 1px 2px 3px; }
.grip { display: flex; align-items: center; height: 9px; gap: 3px; }
.grip i { flex: 1; height: 2px; border: 1px solid #bbb; border-width: 1px 0; }
.grip button { width: 7px; font-size: 10px; font-weight: 700; line-height: 9px; }
.browser-head { display: flex; align-items: center; justify-content: space-between; height: 13px; padding: 0 1px 0 5px; background: #a9a9a9; color: #fff; font-family: "Liberation Mono", monospace; font-weight: 700; }
.browser-head button i { margin-left: 3px; border: 3px solid transparent; border-top: 3px solid #fff; border-bottom: 0; }
.tree { list-style: none; margin: 0; padding: 0 0 0 2px; display: grid; grid-template-rows: repeat(13, 1fr); height: 177px; color: #000; }
.tree li { display: flex; align-items: center; white-space: nowrap; }
.tree .ico { margin-right: 3px; }
.tree .l1 { padding-left: 2px; }
.tree .l1 .ico { margin-left: 2px; }
.exp { width: 7px; height: 7px; box-sizing: border-box; justify-content: center; border: 1px solid #999; background: #fff; line-height: 5px; color: #27408b; flex: none; }
.l1 .exp { margin-right: 4px; }
.tree input { appearance: none; width: 10px; height: 10px; margin: 0; box-sizing: border-box; border: 1px solid #333; background: #fff; display: grid; place-items: center; }
.tree input:checked::before { content: ""; width: 2px; height: 5px; border: solid #1f57a8; border-width: 0 1px 1px 0; transform: rotate(40deg); }
.guide { align-self: stretch; width: 11px; margin-left: 13px; background: linear-gradient(#aaa, #aaa) 5px 0 / 1px 100% no-repeat; }
.l2 .guide { background: linear-gradient(#aaa, #aaa) 5px 0 / 1px 100% no-repeat, linear-gradient(#aaa, #aaa) 5px 50% / 6px 1px no-repeat; }
.l2.last .guide { background-size: 1px 50%, 6px 1px; }
.l2 .exp { margin: 0 3px 0 -9px; }
.branch { align-self: stretch; width: 15px; background: linear-gradient(#aaa, #aaa) 7px 0 / 1px 100% no-repeat, linear-gradient(#aaa, #aaa) 7px 50% / 7px 1px no-repeat; }
.l3.last .branch { background-size: 1px 50%, 7px 1px; }
.l3 .ico { width: 11px; height: 11px; }
.latin { font-size: 9px; }
.tree .selected { background: #3399ff; color: #fff; padding: 0 2px; margin-left: -1px; }
.foot { margin-top: auto; height: 1px; background: #ccc; }

.view { position: relative; min-width: 0; min-height: 0; overflow: hidden; }
.scene { width: 100%; height: 100%; }
.scene text { font-size: 8px; }
.doc-controls { position: absolute; top: 2px; right: 1px; display: flex; gap: 4px; }
.doc-controls svg { width: 7px; height: 7px; }
.cube { position: absolute; top: 25px; right: 11px; width: 46px; height: 50px; }
.cube text { font-size: 14px; fill: #b4b4b4; }
.nav-bar { position: absolute; top: 78px; right: 1px; width: 19px; height: 110px; box-sizing: border-box; padding: 2px 0; display: flex; flex-direction: column; align-items: center; justify-content: space-between; background: #f4f4f4; border: 1px solid #ccc; border-radius: 3px; }
.nav-bar svg { width: 10px; height: 10px; }
.nav-bar .wheel { width: 14px; height: 14px; }
.nav-bar hr { width: 15px; margin: 0; border: 0; border-top: 1px solid #ccc; }
.nav-bar .caret { border-top-color: #999; }
.dot { align-self: flex-end; width: 3px; height: 3px; margin-right: 2px; border: 1px solid #aaa; border-radius: 50%; box-sizing: border-box; }

.status { display: flex; align-items: center; height: 13px; background: linear-gradient(#f0f0f0, #b8b8b8); color: #111; }
.status span { flex: 1; }
.status b { width: 18px; padding-left: 6px; border-left: 1px solid #d9d9d9; font-weight: 600; }
.status b:last-child { width: 14px; }
</style>
